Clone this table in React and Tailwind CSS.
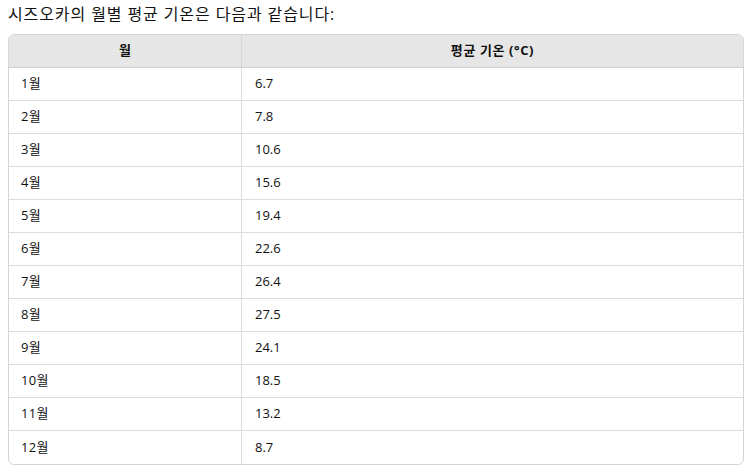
const rows = [
    ["1월", "6.7"],
    ["2월", "7.8"],
    ["3월", "10.6"],
    ["4월", "15.6"],
    ["5월", "19.4"],
    ["6월", "22.6"],
    ["7월", "26.4"],
    ["8월", "27.5"],
    ["9월", "24.1"],
    ["10월", "18.5"],
    ["11월", "13.2"],
    ["12월", "8.7"],
];

export default function App() {
    return (
        <div className="bg-white min-h-screen px-[8px] pt-[2px] text-[#111] font-['Open_Sans','Noto_Sans_CJK_KR',sans-serif]">
            <p className="text-[16px] leading-[24px] mb-[8px] tracking-[0.9px]">시즈오카의 월별 평균 기온은 다음과 같습니다:</p>
            <div className="w-[736px] border border-[#d5d5d5] rounded-[6px] overflow-hidden">
                <div className="grid grid-cols-[233px_1fr] bg-[#e6e6e6] border-b border-[#cfcfcf] h-[33px] items-center text-[13px] font-bold">
                    <div className="h-full flex items-center justify-center border-r border-[#d5d5d5]">월</div>
                    <div className="h-full flex items-center justify-center tracking-[0.6px]">평균 기온 (°C)</div>
                </div>
                {rows.map(([m, t], i) => (
                    <div
                        key={m}
                        className={`grid grid-cols-[233px_1fr] h-[33px] text-[13px] ${i < rows.length - 1 ? "border-b border-[#dcdcdc]" : ""}`}
                    >
                        <div className="flex items-center pl-[12px] border-r border-[#dcdcdc] tracking-[0.3px]">{m}</div>
                        <div className="flex items-center pl-[13px]">{t}</div>
                    </div>
                ))}
            </div>
        </div>
    );
}
